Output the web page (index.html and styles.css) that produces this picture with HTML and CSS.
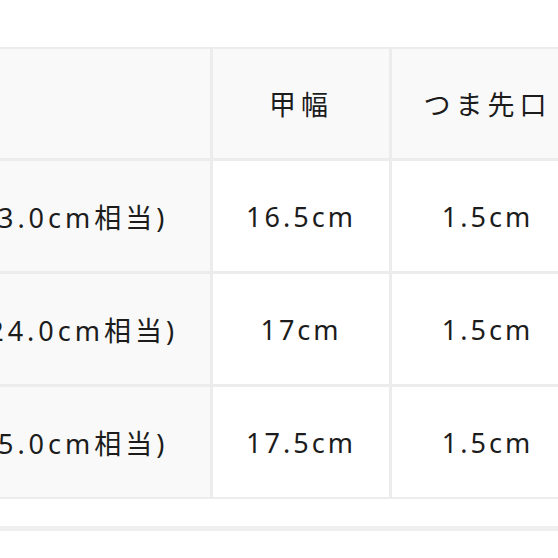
FILE: index.html
```html
<!DOCTYPE html>
<html lang="ja">
<head>
<meta charset="utf-8">
<link rel="stylesheet" href="styles.css">
</head>
<body>
<div class="size-table">
  <div class="cell head"></div>
  <div class="cell head">甲幅</div>
  <div class="cell head">つま先口</div>

  <div class="cell label">22.5cm(23.0cm相当)</div>
  <div class="cell">16.5cm</div>
  <div class="cell">1.5cm</div>

  <div class="cell label">23.75cm(24.0cm相当)</div>
  <div class="cell">17cm</div>
  <div class="cell">1.5cm</div>

  <div class="cell label">24.5cm(25.0cm相当)</div>
  <div class="cell">17.5cm</div>
  <div class="cell">1.5cm</div>
</div>
<div class="separator"></div>
</body>
</html>
```

FILE: styles.css
```css
html, body {
  margin: 0;
  padding: 0;
  background: #ffffff;
  overflow: hidden;
  width: 558px;
  height: 558px;
}

.size-table {
  display: grid;
  grid-template-columns: 401px 176px 191px;
  grid-template-rows: 109px 110px 110px 110px;
  gap: 3px;
  width: max-content;
  margin-top: 47px;
  margin-left: -191px;
  background: #ececec;
  border-top: 2px solid #ececec;
  border-bottom: 2px solid #ececec;
  font-family: "Noto Sans", "Noto Sans CJK JP", sans-serif;
  font-size: 27px;
  letter-spacing: 3px;
  color: #1c1c1c;
}

.cell {
  display: flex;
  align-items: center;
  justify-content: center;
  background: #ffffff;
  white-space: nowrap;
}

.head,
.label {
  background: #f9f9f9;
}

.head {
  letter-spacing: 5px;
}

.label {
  letter-spacing: 4px;
}

.separator {
  margin-top: 27px;
  height: 5px;
  background: #efefef;
}
```
